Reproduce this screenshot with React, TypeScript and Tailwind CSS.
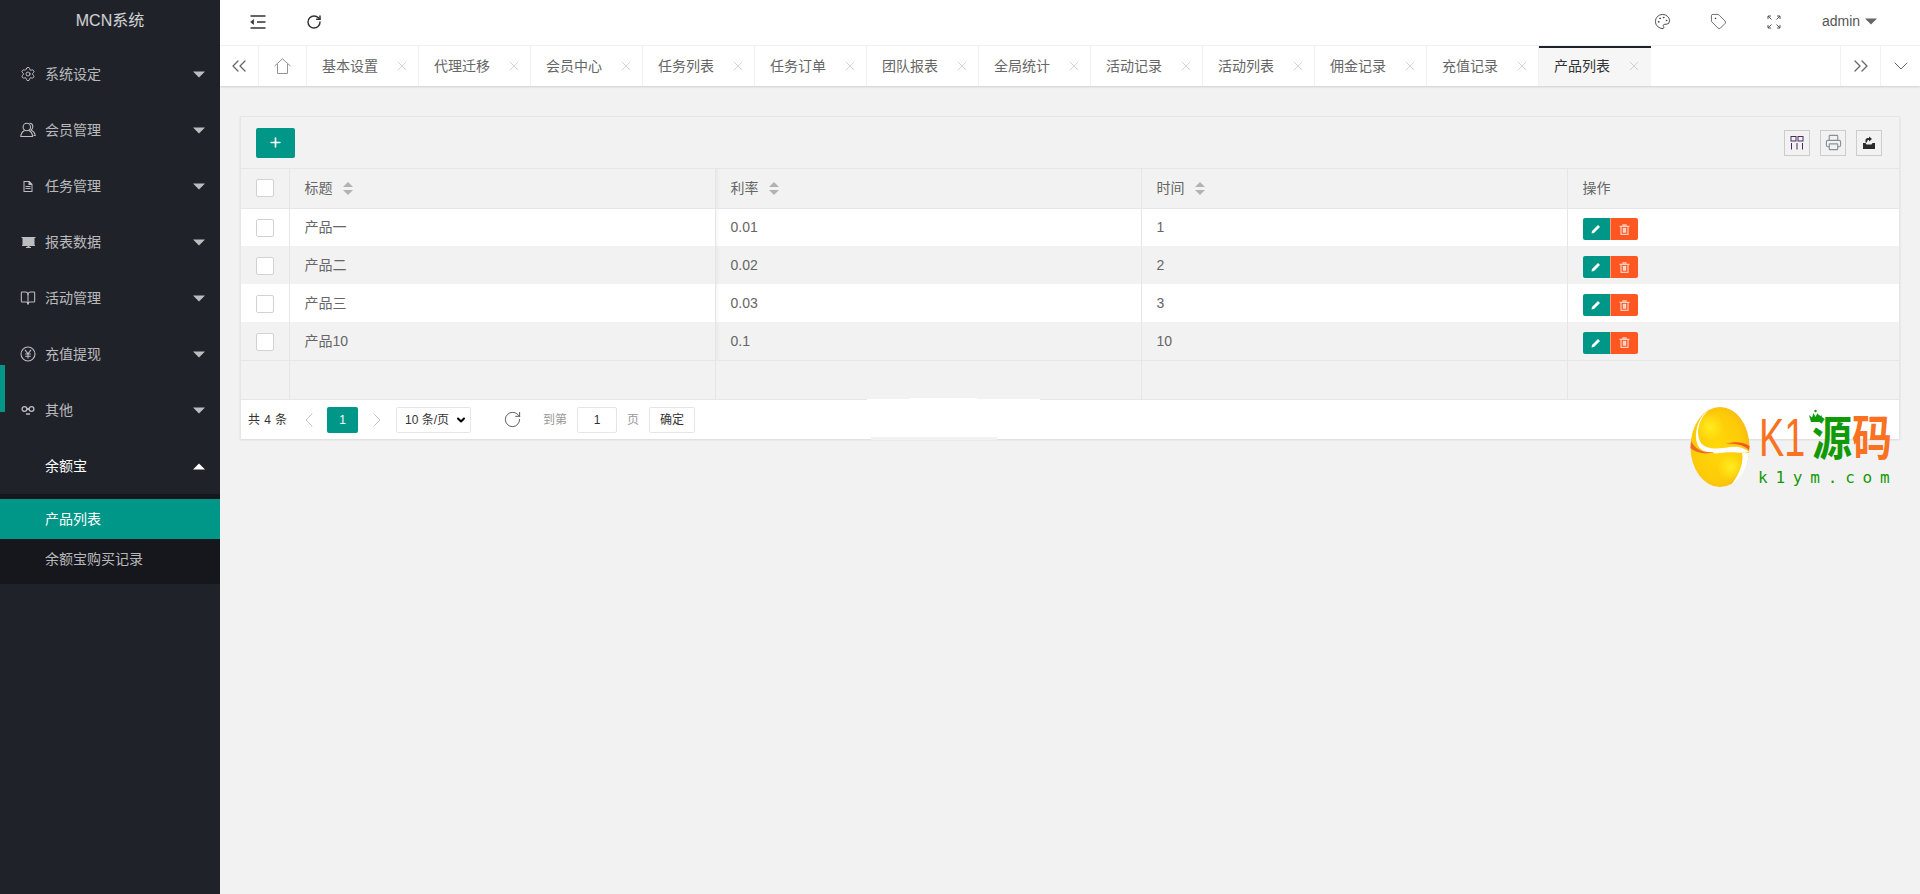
import React from "react";
import { ChevronDown, ChevronLeft, ChevronRight, ChevronsLeft, ChevronsRight, BookOpen, Palette, Plus, RotateCw, Settings, Tag, X, Printer } from "lucide-react";

const font = "font-['Liberation_Sans','Noto_Sans_CJK_SC',sans-serif]";

function Caret({ up, className = "" }: { up?: boolean; className?: string }) {
  return (
    <svg width="12" height="7" viewBox="0 0 12 7" className={className} fill="currentColor">
      {up ? <path d="M0 6.5 L6 0.5 L12 6.5 Z" /> : <path d="M0 0.5 L12 0.5 L6 6.5 Z" />}
    </svg>
  );
}

function UserIcon() {
  return (
    <svg width="16" height="16" viewBox="0 0 16 16" fill="none" stroke="currentColor" strokeWidth="1.1">
      <circle cx="6.8" cy="5" r="3.7" />
      <path d="M4.5 8.5 C2.5 9.5 1 11.5 0.8 14.5 H12.6 C12.4 11.5 11 9.5 9 8.5" />
      <path d="M9.5 1.3 C12 1.2 13 3 12.8 5 C12.6 6.6 11.8 7.6 11 8 C13 9 15 11 15.2 13.5 H13.5" />
    </svg>
  );
}

function YenIcon() {
  return (
    <svg width="16" height="16" viewBox="0 0 16 16" fill="none" stroke="currentColor" strokeWidth="1.1">
      <circle cx="8" cy="8" r="7" />
      <path d="M5 3.8 L8 7.8 L11 3.8 M8 7.8 V12.5 M5.2 8 H10.8 M5.2 10.2 H10.8" />
    </svg>
  );
}

function DocIcon() {
  return (
    <svg width="12" height="13" viewBox="0 0 12 13" fill="currentColor">
      <path d="M1.5 1 H7.5 L10.5 4 V12 H1.5 Z M2.5 2 V11 H9.5 V5 H6.5 V2 Z" fillRule="evenodd" />
      <path d="M3.5 6 H8.5 V7 H3.5 Z M3.5 8 H8.5 V9 H3.5 Z" />
    </svg>
  );
}

function BoardIcon() {
  return (
    <svg width="15" height="14" viewBox="0 0 15 14" fill="currentColor">
      <path d="M0.5 2 H14.5 V3 H13.5 V10 H1.5 V3 H0.5 Z" />
      <path d="M1 10 H14 V11 H1 Z M6.5 11 H8.5 V12 H10 V13 H5 V12 H6.5 Z" />
    </svg>
  );
}

function LinkIcon() {
  return (
    <svg width="14" height="14" viewBox="0 0 14 14" fill="none" stroke="currentColor" strokeWidth="1.3">
      <circle cx="3.5" cy="6" r="2.4" />
      <circle cx="10.5" cy="6" r="2.4" />
      <path d="M5.9 6 H8.1 M5 11 H9" />
    </svg>
  );
}

const menu: [string, React.ReactNode][] = [
  ["系统设定", <Settings size={16} strokeWidth={1.4} />],
  ["会员管理", <UserIcon />],
  ["任务管理", <DocIcon />],
  ["报表数据", <BoardIcon />],
  ["活动管理", <BookOpen size={16} strokeWidth={1.6} />],
  ["充值提现", <YenIcon />],
  ["其他", <LinkIcon />],
];

const tabs = ["基本设置", "代理迁移", "会员中心", "任务列表", "任务订单", "团队报表", "全局统计", "活动记录", "活动列表", "佣金记录", "充值记录", "产品列表"];

const rows = [
  ["产品一", "0.01", "1"],
  ["产品二", "0.02", "2"],
  ["产品三", "0.03", "3"],
  ["产品10", "0.1", "10"],
];

function SortIcon() {
  return (
    <svg width="10" height="13" viewBox="0 0 10 13" fill="#b2b2b2" className="ml-2.5 inline-block align-[-2px]">
      <path d="M5 0 L10 5 H0 Z" />
      <path d="M0 8 H10 L5 13 Z" />
    </svg>
  );
}

function Check() {
  return <div className="h-[18px] w-[18px] rounded-[2px] border border-[#d2d2d2] bg-white" />;
}

function Sidebar() {
  return (
    <aside className="relative flex w-[220px] shrink-0 flex-col bg-[#20222a] text-[14px] text-white/70">
      <div className="flex h-[46px] items-center justify-center pb-1 text-[16px] text-white/80">MCN系统</div>
      {menu.map(([label, icon]) => (
        <div key={label} className="flex h-14 items-center pl-5 pr-[15px]">
          <span className="flex w-4 items-center justify-center text-white/70">{icon}</span>
          <span className="ml-[9px] flex-1 leading-none">{label}</span>
          <Caret className="text-white/70" />
        </div>
      ))}
      <div className="flex h-14 items-center pl-[45px] pr-[15px] text-white">
        <span className="flex-1 leading-none">余额宝</span>
        <Caret up />
      </div>
      <div className="bg-[#16171d] py-[5px]">
        <div className="flex h-10 items-center bg-[#009688] pl-[45px] text-white">产品列表</div>
        <div className="flex h-10 items-center pl-[45px]">余额宝购买记录</div>
      </div>
      <div className="absolute left-0 top-[365px] h-[47px] w-[5px] bg-[#009688]" />
    </aside>
  );
}

function TopBar() {
  return (
    <header className="flex h-[46px] shrink-0 items-center border-b border-[#f2f2f2] bg-white pb-[2px] text-[#333]">
      <div className="ml-[10px] flex w-[56px] justify-center">
        <svg width="16" height="14" viewBox="0 0 16 14" fill="none" stroke="#333" strokeWidth="1.4">
          <path d="M0.5 1 H15.5 M0.5 13 H15.5 M7 7 H15.5" />
          <path d="M3.6 4.6 L0.6 7 L3.6 9.4 Z" fill="#333" strokeWidth="0.6" />
        </svg>
      </div>
      <div className="flex w-[56px] justify-center"><RotateCw size={16} strokeWidth={2.2} /></div>
      <div className="flex-1" />
      <div className="flex w-[56px] justify-center"><Palette size={17} strokeWidth={1.2} /></div>
      <div className="flex w-[56px] justify-center"><Tag size={17} strokeWidth={1} /></div>
      <div className="flex w-[56px] justify-center">
        <svg width="14" height="14" viewBox="0 0 14 14" fill="none" stroke="#555" strokeWidth="1">
          <path d="M1 4 V1 H4 M1 1 L4.5 4.5 M10 1 H13 V4 M13 1 L9.5 4.5 M1 10 V13 H4 M1 13 L4.5 9.5 M10 13 H13 V10 M13 13 L9.5 9.5" />
        </svg>
      </div>
      <div className="ml-[20px] flex w-[98px] items-center text-[14px] text-[#555]">
        <span>admin</span>
        <Caret className="ml-[5px] text-[#666]" />
      </div>
    </header>
  );
}

function TabBar() {
  return (
    <nav className="z-10 flex h-10 shrink-0 items-stretch bg-white text-[14px] text-[#666] shadow-[0_1px_2px_rgba(0,0,0,0.15)]">
      <div className="flex w-[39px] items-center justify-center border-r border-[#f2f2f2]"><ChevronsLeft size={24} strokeWidth={1.3} /></div>
      <div className="flex w-[48px] items-center justify-center border-r border-[#f2f2f2] text-[#888]">
        <svg width="17" height="16" viewBox="0 0 17 16" fill="none" stroke="currentColor" strokeWidth="0.9">
          <path d="M0.6 8 L8.5 0.8 L16.4 8" />
          <path d="M3.5 6 V15.5 H13.5 V6" />
        </svg>
      </div>
      {tabs.map((t, i) => {
        const active = i === tabs.length - 1;
        return (
          <div
            key={t}
            className={active
              ? "relative flex w-[112px] items-center bg-[#f6f6f6] pl-[15px] text-[#333]"
              : "relative flex w-[112px] items-center border-r border-[#f2f2f2] pl-[15px]"}
          >
            {active && <div className="absolute left-0 right-0 top-0 h-[2px] bg-[#20222a]" />}
            <span>{t}</span>
            <X size={16} strokeWidth={1} className="ml-[16px] text-[#bbb]" />
          </div>
        );
      })}
      <div className="flex-1" />
      <div className="flex w-10 items-center justify-center border-l border-[#f2f2f2]"><ChevronsRight size={24} strokeWidth={1.3} /></div>
      <div className="flex w-10 items-center justify-center border-l border-[#f2f2f2]"><ChevronDown size={24} strokeWidth={1} /></div>
    </nav>
  );
}

function ToolIcon({ children }: { children: React.ReactNode }) {
  return <div className="flex h-[26px] w-[26px] items-center justify-center border border-[#ccc] text-[#333]">{children}</div>;
}

function Toolbar() {
  return (
    <div className="flex h-[52px] items-center justify-between border-b border-[#e6e6e6] pl-[15px] pr-[17px]">
      <button className="flex h-[30px] w-[39px] items-center justify-center rounded-[2px] bg-[#009688] text-white"><Plus size={15} strokeWidth={2.6} /></button>
      <div className="flex gap-[10px]">
        <ToolIcon>
          <svg width="14" height="14" viewBox="0 0 14 14" fill="none" stroke="#4b2a63" strokeWidth="1">
            <rect x="1" y="0.5" width="5" height="4.5" /><rect x="8" y="0.5" width="5" height="4.5" />
            <path d="M1.5 7 V13.5 M7 7 V13.5 M12.5 7 V13.5" />
          </svg>
        </ToolIcon>
        <ToolIcon><Printer size={17} strokeWidth={1.6} className="text-[#8a8f96]" /></ToolIcon>
        <ToolIcon>
          <svg width="14" height="14" viewBox="0 0 14 14" fill="#2b2b2b">
            <path d="M1 7 H3.5 L4.5 8.5 H9.5 L10.5 7 H13 V13 H1 Z" />
            <path d="M3.5 6.5 V4 C3.5 2.6 5 2 7 2 V0.5 L10 3 L7 5.5 V4 C5.8 4 5 4.5 5 6.5 Z" />
          </svg>
        </ToolIcon>
      </div>
    </div>
  );
}

function EditIcon() {
  return (
    <svg width="10" height="10" viewBox="0 0 10 10" fill="currentColor">
      <path d="M0.5 9.5 L1 7 L7 1 L9 3 L3 9 Z" />
    </svg>
  );
}

function TrashIcon() {
  return (
    <svg width="11" height="11" viewBox="0 0 11 11" fill="none" stroke="currentColor" strokeWidth="1.2">
      <path d="M0.5 2.4 H10.5 M4 2 V0.8 H7 V2 M2 2.4 V10.4 H9 V2.4" />
      <path d="M4 4 H7 V8.5 H4 Z" fill="currentColor" strokeWidth="0.4" />
    </svg>
  );
}

function Table() {
  return (
    <table className="w-full table-fixed text-[14px] text-[#666]">
      <colgroup>
        <col className="w-[48px]" />
        <col className="w-[426px]" />
        <col className="w-[426px]" />
        <col className="w-[426px]" />
        <col />
      </colgroup>
      <thead>
        <tr className="h-[39px] border-b border-[#e6e6e6]">
          <th className="border-r border-[#e6e6e6] pl-[15px] font-normal"><Check /></th>
          {["标题", "利率", "时间"].map((h, i) => (
            <th key={h} className={i === 1 ? "border-r border-[#e6e6e6] pl-[15px] text-left font-normal shadow-[inset_5px_0_4px_-4px_rgba(0,0,0,0.06)]" : "border-r border-[#e6e6e6] pl-[15px] text-left font-normal"}>
              {h}<SortIcon />
            </th>
          ))}
          <th className="pl-[15px] text-left font-normal">操作</th>
        </tr>
      </thead>
      <tbody>
        {rows.map((r, i) => (
          <tr key={r[0]} className={i % 2 === 0 ? "h-[38px] bg-white" : "h-[38px] bg-[#f2f2f2]"}>
            <td className="border-r border-[#e6e6e6] pl-[15px] pt-[2px]"><Check /></td>
            {r.map((c, j) => (
              <td key={j} className={j === 1 ? "border-r border-[#e6e6e6] pl-[15px] pt-[1px] shadow-[inset_5px_0_4px_-4px_rgba(0,0,0,0.06)]" : "border-r border-[#e6e6e6] pl-[15px] pt-[1px]"}>{c}</td>
            ))}
            <td className="pl-[15px] pt-[4px]">
              <div className="flex h-[22px] w-[55px]">
                <div className="flex w-[27.5px] items-center justify-center rounded-l-[2px] bg-[#009688] text-white"><EditIcon /></div>
                <div className="flex w-[27.5px] items-center justify-center rounded-r-[2px] border-l border-white/40 bg-[#ff5722] text-white/70"><TrashIcon /></div>
              </div>
            </td>
          </tr>
        ))}
        <tr className="h-[39px] border-t border-[#e6e6e6]">
          <td className="border-r border-[#e6e6e6]" />
          <td className="border-r border-[#e6e6e6]" />
          <td className="border-r border-[#e6e6e6]" />
          <td className="border-r border-[#e6e6e6]" />
          <td />
        </tr>
      </tbody>
    </table>
  );
}

function Pager() {
  return (
    <div className="relative flex h-[40px] items-center border-t border-[#e6e6e6] bg-white pl-[7px] text-[12px] text-[#333]">
      <span className="w-[50px] tracking-[0.4px]">共 4 条</span>
      <ChevronLeft size={24} strokeWidth={1} className="ml-[-1px] text-[#c2c2c2]" />
      <div className="ml-[6px] flex h-[26px] w-[31px] items-center justify-center rounded-[2px] bg-[#009688] text-white">1</div>
      <ChevronRight size={24} strokeWidth={1} className="ml-[7px] text-[#c2c2c2]" />
      <div className="ml-[7px] flex h-[26px] w-[75px] items-center justify-between rounded-[2px] border border-[#e6e6e6] pl-2 pr-[3px] text-[#333]">
        <span>10 条/页</span>
        <ChevronDown size={12} strokeWidth={4} className="text-black" />
      </div>
      <RotateCw size={19} strokeWidth={1} className="ml-[32px] text-[#333]" />
      <span className="ml-[21px] text-[#999]">到第</span>
      <div className="ml-[10px] flex h-[26px] w-[40px] items-center justify-center rounded-[2px] border border-[#e6e6e6] text-[#333]">1</div>
      <span className="ml-[10px] text-[#999]">页</span>
      <div className="ml-[10px] flex h-[26px] w-[46px] items-center justify-center rounded-[2px] border border-[#e6e6e6] text-[#333]">确定</div>
      {/* light smudges in the picture along the pager edges */}
      <div className="absolute left-[626px] top-[-1px] h-[1px] w-[173px] bg-white" />
      <div className="absolute left-[669px] top-[-2px] h-[2px] w-[67px] bg-white" />
      <div className="absolute bottom-[-1px] left-[630px] h-[3px] w-[126px] bg-[#f2f2f2]" />
    </div>
  );
}

function Logo() {
  return (
    <div className="absolute left-[1470px] top-[321px] h-[80px] w-[202px]">
      <svg width="60" height="80" viewBox="0 0 60 80" className="absolute left-0 top-0">
        <defs>
          <radialGradient id="gold" cx="0.45" cy="0.5" r="0.7">
            <stop offset="0" stopColor="#ffd80a" />
            <stop offset="0.6" stopColor="#fdcb08" />
            <stop offset="1" stopColor="#f4a91c" />
          </radialGradient>
          <radialGradient id="glow">
            <stop offset="0" stopColor="#fff020" stopOpacity="0.9" />
            <stop offset="1" stopColor="#fff020" stopOpacity="0" />
          </radialGradient>
        </defs>
        <ellipse cx="30" cy="40" rx="29.5" ry="40" fill="url(#gold)" />
        <circle cx="20" cy="20" r="14" fill="url(#glow)" />
        <circle cx="41" cy="60" r="14" fill="url(#glow)" />
        <path d="M18 4 C9 12 5 26 11 36 C16 43 30 42 40 40 C48 39 55 41 59 45 C54 47 40 44 30 46 C18 47 9 44 7 36 C4 24 9 9 18 4 Z" fill="#ffffff" />
        <path d="M1 34 C5 42 12 46 24 45 C16 48 6 46 0.5 41 Z" fill="#ee6b25" />
        <path d="M59 43 C54 38 46 36 36 37 C44 34 54 35 59.5 39 Z" fill="#ee5b25" />
        <path d="M42 77 C50 66 54 54 52 46 L59 46 C58 60 51 72 42 77 Z" fill="#ffffff" />
      </svg>
      <span className="absolute left-[69px] top-[0px] origin-left scale-x-[0.7] font-['Liberation_Sans',sans-serif] text-[54px] leading-[60px] text-[#f97121]">K1</span>
      <span className="absolute left-[122px] top-[7px] origin-top scale-y-[1.2] text-[40px] font-bold leading-[40px] text-[#129a06]">源</span>
      <span className="absolute left-[162px] top-[7px] origin-top scale-y-[1.2] text-[40px] font-bold leading-[40px] text-[#f97121]">码</span>
      <svg width="15" height="14" viewBox="0 0 15 14" fill="#129a06" className="absolute left-[118px] top-[2px]">
        <path d="M1 6 L4 8.5 L5.5 4 L7.5 8 L9.5 4 L11 8.5 L14 6 L12 13 H3 Z" />
        <circle cx="7.5" cy="2" r="1.2" />
      </svg>
      <span className="absolute left-[68px] top-[61px] font-['DejaVu_Sans_Mono',monospace] text-[16px] leading-[20px] tracking-[7.8px] text-[#129a06]">k1ym.com</span>
    </div>
  );
}

export default function App() {
  return (
    <div className={`flex h-screen w-full overflow-hidden bg-[#f2f2f2] ${font}`}>
      <Sidebar />
      <main className="flex min-w-0 flex-1 flex-col">
        <TopBar />
        <TabBar />
        <div className="relative flex-1 px-5 pt-[30px]">
          <section className="border-t border-l border-r border-[#e6e6e6] shadow-[0_1px_2px_rgba(0,0,0,0.1)]">
            <Toolbar />
            <Table />
            <Pager />
          </section>
          <Logo />
        </div>
      </main>
    </div>
  );
}
